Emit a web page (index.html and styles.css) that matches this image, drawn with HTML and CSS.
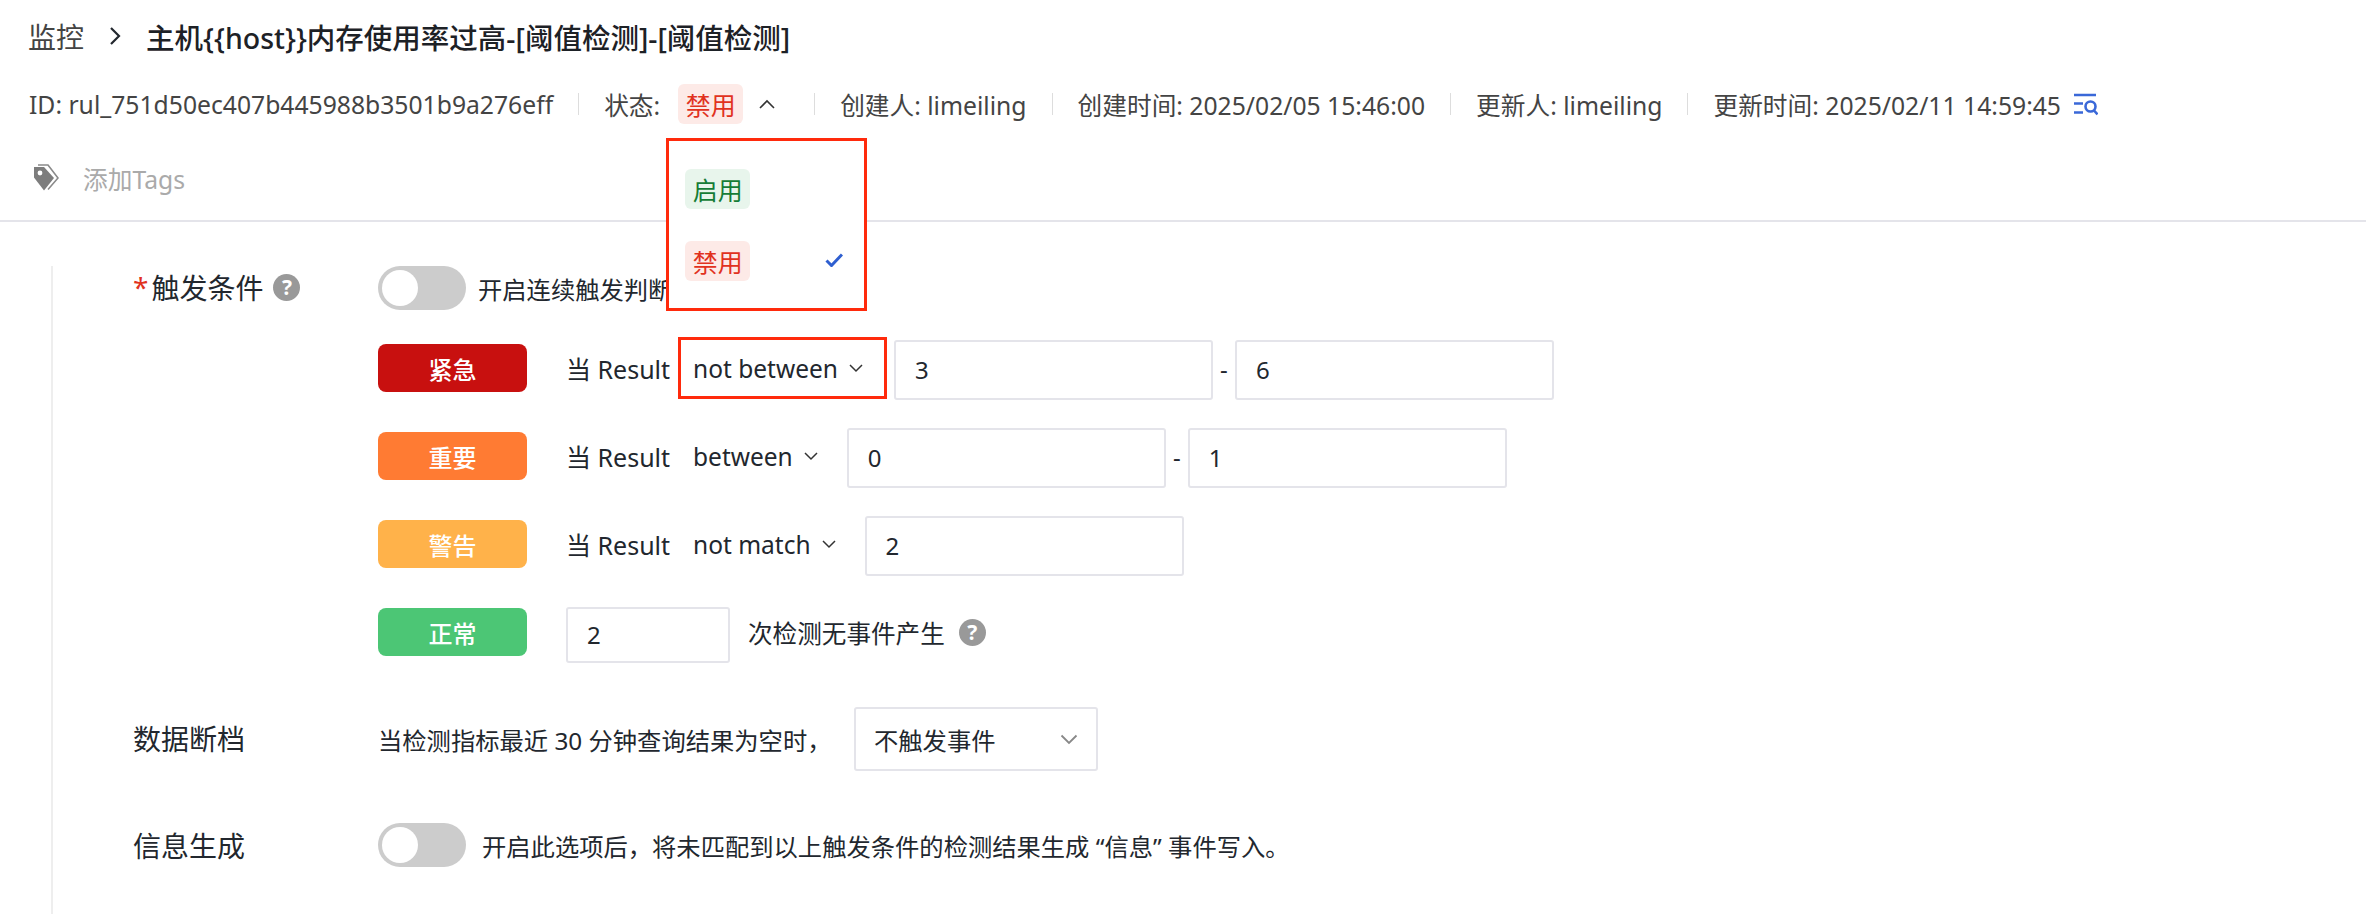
FILE: index.html
```html
<!DOCTYPE html>
<html lang="zh-CN">
<head>
<meta charset="utf-8">
<title>监控</title>
<link rel="stylesheet" href="styles.css">
</head>
<body>
<header class="head">
  <div class="crumbs">
    <span class="crumb">监控</span>
    <svg class="crumb-sep" width="12" height="20" viewBox="0 0 12 20"><path d="M2 2l8 8-8 8" fill="none" stroke="#22272e" stroke-width="2.2"/></svg>
    <span class="crumb-title">主机{{host}}内存使用率过高-[阈值检测]-[阈值检测]</span>
  </div>
  <div class="meta">
    <span>ID: rul_751d50ec407b445988b3501b9a276eff</span>
    <i class="sep"></i>
    <span class="status">状态:<span class="tag tag-red status-tag">禁用</span>
      <svg class="caret-up" width="20" height="12" viewBox="0 0 20 12"><path d="M3 10l7-7 7 7" fill="none" stroke="#333" stroke-width="1.6"/></svg>
      <div class="menu">
        <div class="menu-item"><span class="tag tag-green">启用</span></div>
        <div class="menu-item"><span class="tag tag-red">禁用</span>
          <svg class="check" width="18" height="14" viewBox="0 0 18 14"><path d="M1.500 7.500l5 5L17 1.500" fill="none" stroke="#2f5fd0" stroke-width="3"/></svg>
        </div>
      </div>
    </span>
    <i class="sep"></i>
    <span>创建人: limeiling</span>
    <i class="sep"></i>
    <span>创建时间: 2025/02/05 15:46:00</span>
    <i class="sep"></i>
    <span>更新人: limeiling</span>
    <i class="sep"></i>
    <span>更新时间: 2025/02/11 14:59:45</span>
    <svg class="log-icon" width="25" height="23" viewBox="0 0 25 23"><g fill="none" stroke="#3a68d8" stroke-width="2.600"><path d="M1 2h22M1 10.500h9M1 19.500h9"/><circle cx="17.500" cy="13.500" r="5"/><path d="M21 17.500l3.500 4"/></g></svg>
  </div>
  <div class="tags">
    <svg width="26" height="27" viewBox="0 0 26 27"><path d="M1 3h10l10 11-10 12.500-10-13z" fill="#7d7d7d"/><circle cx="7" cy="9" r="2.400" fill="#fff"/><path d="M5 1h10l10 13-10 11.500" fill="none" stroke="#8a8a8a" stroke-width="1.600"/></svg>
    <span class="tags-add">添加Tags</span>
  </div>
</header>
<main class="body">
  <section class="rules">
    <div class="field field-trigger">
      <div class="label"><span class="req">*</span>触发条件<span class="help help-label">?</span></div>
      <div class="content">
        <div class="switch-row"><span class="switch"><span class="knob"></span></span><span class="switch-text">开启连续触发判断</span></div>
        <div class="rule"><span class="level level-critical">紧急</span><span class="when">当 Result</span><span class="op op-marked">not between<svg class="chev" width="14" height="9" viewBox="0 0 14 9"><path d="M1 1l6 6 6-6" fill="none" stroke="#333" stroke-width="1.500"/></svg></span><span class="input range">3</span><span class="dash">-</span><span class="input range">6</span></div>
        <div class="rule"><span class="level level-important">重要</span><span class="when">当 Result</span><span class="op">between<svg class="chev" width="14" height="9" viewBox="0 0 14 9"><path d="M1 1l6 6 6-6" fill="none" stroke="#333" stroke-width="1.500"/></svg></span><span class="input range">0</span><span class="dash">-</span><span class="input range">1</span></div>
        <div class="rule"><span class="level level-warning">警告</span><span class="when">当 Result</span><span class="op">not match<svg class="chev" width="14" height="9" viewBox="0 0 14 9"><path d="M1 1l6 6 6-6" fill="none" stroke="#333" stroke-width="1.500"/></svg></span><span class="input range">2</span></div>
        <div class="rule"><span class="level level-ok">正常</span><span class="input count">2</span><span class="ok-text">次检测无事件产生</span><span class="help help-ok">?</span></div>
      </div>
    </div>
    <div class="field field-nodata">
      <div class="label">数据断档</div>
      <div class="content inline">
        <span class="text">当检测指标最近 30 分钟查询结果为空时，</span>
        <span class="input select">不触发事件<svg class="chev-grey" width="18" height="11" viewBox="0 0 18 11"><path d="M1.500 1.500L9 9l7.500-7.500" fill="none" stroke="#888" stroke-width="1.800"/></svg></span>
      </div>
    </div>
    <div class="field field-info">
      <div class="label">信息生成</div>
      <div class="content inline">
        <span class="switch"><span class="knob"></span></span><span class="switch-text info-text">开启此选项后，将未匹配到以上触发条件的检测结果生成 “信息” 事件写入。</span>
      </div>
    </div>
  </section>
</main>
</body>
</html>
```
FILE: styles.css
```css
* { box-sizing: border-box; }
html, body { margin: 0; height: 100%; }
body {
  height: 914px;
  overflow: hidden;
  background: #fff;
  color: #22272e;
  font-family: "Noto Sans", "Noto Sans CJK SC", sans-serif;
  font-size: 24px;
}
.head { height: 222px; border-bottom: 2px solid #e4e4ea; padding: 0 0 0 29px; }
.crumbs { display: flex; align-items: center; height: 74px; padding-bottom: 2px; }
.crumb { font-size: 28px; color: #444; margin-left: -1px; }
.crumb-sep { margin: 0 25px 0 25px; }
.crumb-title { font-size: 28.500px; font-weight: 500; color: #1d2126; white-space: nowrap; }
.meta { display: flex; align-items: center; height: 60px; font-size: 24.700px; color: #444; white-space: nowrap; }
.sep { width: 1px; height: 22px; background: #ddd; margin: 0 25px; }
.status { display: flex; align-items: center; position: relative; }
.tag { display: inline-flex; align-items: center; justify-content: center; width: 65px; height: 40px; border-radius: 6px; font-size: 25px; }
.tag-red { background: #fdeae7; color: #e1321e; }
.tag-green { background: #e8f5ec; color: #167c36; }
.status-tag { margin-left: 18px; }
.caret-up { margin-left: 14px; margin-right: 12px; }
.menu {
  position: absolute; left: 62px; top: 54px; width: 201px; height: 173px;
  background: #fff; outline: 3px solid #ff2a0c; outline-offset: -3px;
  padding: 31px 19px; display: flex; flex-direction: column; gap: 32px; z-index: 5;
}
.menu-item { display: flex; align-items: center; justify-content: space-between; padding-right: 5px; }
.check { margin-top: -2px; }
.tags { display: flex; align-items: center; height: 70px; padding-left: 4px; padding-top: 17px; }
.tags-add { color: #aaa; font-size: 24.700px; margin-left: 24px; }
.log-icon { margin-left: 12px; }
.body { padding: 44px 0 0 51px; }
.rules { border-left: 2px solid #eee; height: 655px; padding-left: 80px; }
.field { display: flex; }
.label { width: 245px; flex: none; font-size: 28px; color: #22272e; display: flex; align-items: center; height: 42px; }
.req { color: #e1321e; margin-right: 3px; }
.help { display: inline-flex; align-items: center; justify-content: center; flex: none; width: 27px; height: 27px; border-radius: 50%; background: #999; color: #fff; font-size: 21px; font-weight: 700; }
.help-label { margin-left: 10px; }
.switch-row { display: flex; align-items: center; height: 44px; }
.switch { flex: none; width: 88px; height: 44px; border-radius: 22px; background: #ccc; padding: 4px; display: inline-block; }
.knob { display: block; width: 36px; height: 36px; border-radius: 50%; background: #fff; }
.switch-text { font-size: 24.300px; margin-left: 12px; white-space: nowrap; }
.rule { display: flex; align-items: center; height: 60px; margin-top: 28px; }
.level { flex: none; width: 149px; height: 48px; border-radius: 8px; color: #fff; font-size: 24px; font-weight: 500; display: flex; align-items: center; justify-content: center; }
.level-critical { background: #c8100f; }
.level-important { background: #ff7b33; }
.level-warning { background: #ffb24a; }
.level-ok { background: #4cc675; }
.when { margin-left: 39px; font-size: 25px; width: 112px; white-space: nowrap; }
.op { display: inline-flex; align-items: center; height: 62px; padding: 0 22px 0 15px; font-size: 24.500px; white-space: nowrap; margin-right: 7px; }
.op-marked { outline: 3px solid #ff2a0c; outline-offset: -3px; padding-right: 24px; }
.chev { margin-left: 11px; }
.input { display: flex; align-items: center; border: 2px solid #e4e4ea; border-radius: 3px; height: 60px; padding: 0 19px; font-size: 24px; background: #fff; }
.range { width: 319px; margin-top: 3px; }
.dash { margin: 0 5px; width: 12px; text-align: center; }
.count { width: 164px; margin-left: 39px; height: 56px; margin-top: 5px; }
.ok-text { margin-left: 18px; font-size: 24.600px; white-space: nowrap; }
.help-ok { margin-left: 14px; }
.field-nodata { margin-top: 45px; }
.field-nodata .label { height: 62px; }
.inline { display: flex; align-items: center; }
.text { font-size: 24.300px; width: 476px; white-space: nowrap; }
.select { width: 244px; height: 64px; justify-content: space-between; padding: 0 18px; font-size: 24.300px; }
.field-info { margin-top: 52px; }
.field-info .label { height: 44px; }
.info-text { margin-left: 16px; }
```
